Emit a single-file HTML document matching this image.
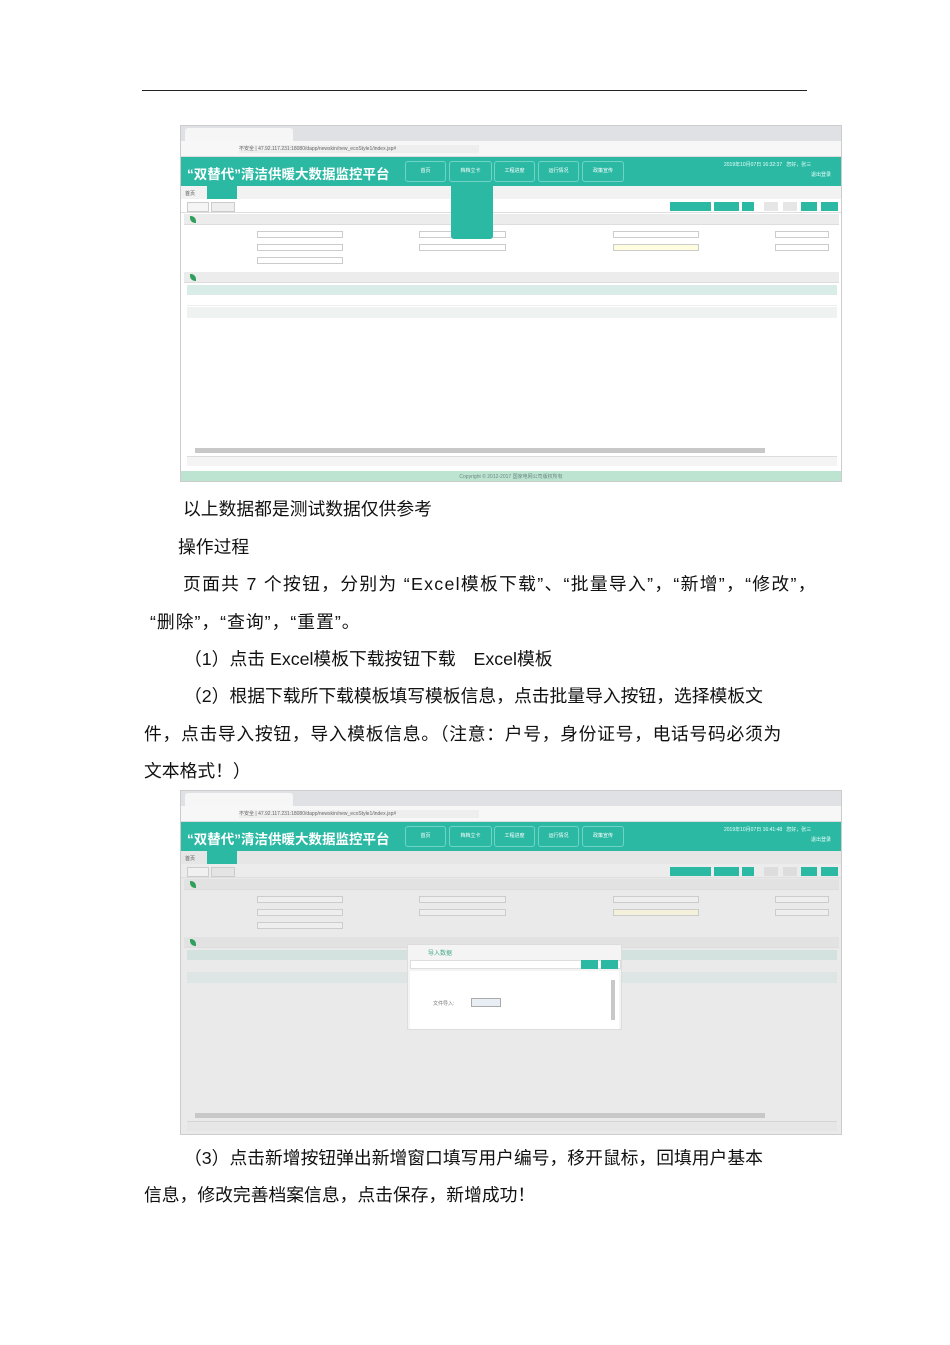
<!DOCTYPE html>
<html><head><meta charset="utf-8">
<style>
*{margin:0;padding:0;box-sizing:border-box}
body{width:950px;height:1345px;background:#fff;position:relative;overflow:hidden;font-family:"Liberation Sans","Noto Sans CJK SC",sans-serif;color:#111}
.hl{position:absolute;left:142px;top:90px;width:665px;height:1px;background:#222}
.t{position:absolute;font-size:17.8px;white-space:nowrap;line-height:20px;color:#111}
.ss{position:absolute;left:180px;width:662px;background:#fff;border:1px solid #ccc;overflow:hidden;font-size:5px;color:#555}
.ss div{position:absolute}
.tabbar{left:0;top:0;width:100%;height:15px;background:#dfe1e5}
.tab{left:4px;top:2px;width:108px;height:13px;background:#f6f6f6;border-radius:3px 3px 0 0}
.addr{left:0;top:15px;width:100%;height:16px;background:#f7f7f7;border-bottom:1px solid #ddd}
.head{left:0;top:31px;width:100%;height:29px;background:#2cb9a4}
.title{left:6px;top:6px;font-size:13.5px;font-weight:bold;color:#fff;white-space:nowrap}
.nb{top:4px;height:21px;border:1px solid #6fd4c4;border-radius:3px;color:#fff;font-size:5px;line-height:19px;text-align:center}
.nav{left:0;top:60px;width:100%;height:13px;background:#f2f2f2}
.navsel{left:26px;top:0;width:30px;height:13px;background:#2cb9a4}
.sub{left:0;top:73px;width:100%;height:14px;background:#fff;border-bottom:1px solid #ddd}
.btn{top:76px;height:9px;background:#2cb9a4}
.btng{top:76px;height:9px;background:#e6e6e6}
.sec{left:3px;width:655px;height:11px;background:#ececec;border-bottom:1px solid #ddd}
.leaf{left:6px;top:2px;width:6px;height:7px;background:#2e9f5c;border-radius:0 5px 0 5px}
.inp{height:7px;border:1px solid #ccc;background:#fff}
.th{left:6px;width:650px;height:10px;background:#d9ece8}
.row{left:6px;width:650px;height:11px}
.gray{background:#eef3f2}
.foot{left:0;width:100%;height:12px;background:#bde3d1}
.sb{left:14px;width:570px;height:5px;background:#c8c8c8}
</style></head><body>
<div class="hl"></div>

<!-- Screenshot 1 -->
<div class="ss" style="top:125px;height:357px">
 <div class="tabbar"><div class="tab"></div></div>
 <div class="addr"><div style="left:58px;top:4px;width:240px;height:8px;background:#eee;font-size:5px;color:#666;line-height:8px">不安全 | 47.92.117.231:18080/dapp/newskin/new_ecoStyle1/index.jsp#</div></div>
 <div class="head">
  <div class="title">“双替代”清洁供暖大数据监控平台</div>
  <div class="nb" style="left:224px;width:41px">首页</div>
  <div class="nb" style="left:268px;width:43px">档档立卡</div>
  <div class="nb" style="left:313px;width:41px">工程进度</div>
  <div class="nb" style="left:357px;width:41px">运行情况</div>
  <div class="nb" style="left:401px;width:42px">政策宣传</div>
  <div style="left:543px;top:4px;color:#e8fffa;white-space:nowrap">2019年10月07日 16:32:37 &nbsp; 您好，张三</div>
  <div style="left:630px;top:14px;color:#e8fffa">退出登录</div>
 </div>
 <div class="nav"><div style="left:4px;top:4px">首页</div><div class="navsel"></div></div>
 <div class="sub"><div style="left:6px;top:3px;width:22px;height:10px;border:1px solid #ccc;background:#f5f5f5"></div><div style="left:30px;top:3px;width:24px;height:10px;border:1px solid #ccc;background:#eee"></div></div>
 <div class="btn" style="left:489px;width:41px"></div><div class="btn" style="left:533px;width:25px"></div><div class="btn" style="left:561px;width:12px"></div>
 <div class="btng" style="left:583px;width:14px"></div><div class="btng" style="left:602px;width:14px"></div>
 <div class="btn" style="left:620px;width:16px"></div><div class="btn" style="left:640px;width:17px"></div>
 <div class="sec" style="top:88px"><div class="leaf"></div></div>
 <div class="inp" style="left:76px;top:105px;width:86px"></div><div class="inp" style="left:238px;top:105px;width:87px"></div><div class="inp" style="left:432px;top:105px;width:86px"></div><div class="inp" style="left:594px;top:105px;width:54px"></div>
 <div class="inp" style="left:76px;top:118px;width:86px"></div><div class="inp" style="left:238px;top:118px;width:87px"></div><div class="inp" style="left:432px;top:118px;width:86px;background:#fffde0"></div><div class="inp" style="left:594px;top:118px;width:54px"></div>
 <div class="inp" style="left:76px;top:131px;width:86px"></div>
 <div class="sec" style="top:146px"><div class="leaf"></div></div>
 <div class="th" style="top:159px"></div>
 <div class="row" style="top:169px;border-bottom:1px solid #eee"></div>
 <div class="row gray" style="top:181px"></div>
 <div style="left:270px;top:60px;width:42px;height:53px;background:#2cb9a4;border-radius:0 0 3px 3px"></div>
 <div class="sb" style="top:322px"></div>
 <div style="left:6px;top:330px;width:650px;height:10px;background:#f4f4f4;border-top:1px solid #ddd"></div>
 <div class="foot" style="top:345px;text-align:center;color:#6a8a80;line-height:12px"><span style="position:static">Copyright © 2012-2017 国家电网公司版权所有</span></div>
</div>

<!-- Screenshot 2 -->
<div class="ss" style="top:790px;height:345px;background:#eaeaea">
 <div class="tabbar"><div class="tab"></div></div>
 <div class="addr"><div style="left:58px;top:4px;width:240px;height:8px;background:#eee;font-size:5px;color:#666;line-height:8px">不安全 | 47.92.117.231:18080/dapp/newskin/new_ecoStyle1/index.jsp#</div></div>
 <div class="head">
  <div class="title">“双替代”清洁供暖大数据监控平台</div>
  <div class="nb" style="left:224px;width:41px">首页</div>
  <div class="nb" style="left:268px;width:43px">档档立卡</div>
  <div class="nb" style="left:313px;width:41px">工程进度</div>
  <div class="nb" style="left:357px;width:41px">运行情况</div>
  <div class="nb" style="left:401px;width:42px">政策宣传</div>
  <div style="left:543px;top:4px;color:#e8fffa;white-space:nowrap">2019年10月07日 16:41:48 &nbsp; 您好，张三</div>
  <div style="left:630px;top:14px;color:#e8fffa">退出登录</div>
 </div>
 <div class="nav" style="background:#e6e6e6"><div style="left:4px;top:4px">首页</div><div class="navsel"></div></div>
 <div class="sub" style="background:#ececec"><div style="left:6px;top:3px;width:22px;height:10px;border:1px solid #ccc;background:#f0f0f0"></div><div style="left:30px;top:3px;width:24px;height:10px;border:1px solid #ccc;background:#e4e4e4"></div></div>
 <div class="btn" style="left:489px;width:41px"></div><div class="btn" style="left:533px;width:25px"></div><div class="btn" style="left:561px;width:12px"></div>
 <div class="btng" style="left:583px;width:14px;background:#ddd"></div><div class="btng" style="left:602px;width:14px;background:#ddd"></div>
 <div class="btn" style="left:620px;width:16px"></div><div class="btn" style="left:640px;width:17px"></div>
 <div class="sec" style="top:88px;background:#e2e2e2"><div class="leaf"></div></div>
 <div class="inp" style="left:76px;top:105px;width:86px;background:#eee"></div><div class="inp" style="left:238px;top:105px;width:87px;background:#eee"></div><div class="inp" style="left:432px;top:105px;width:86px;background:#eee"></div><div class="inp" style="left:594px;top:105px;width:54px;background:#eee"></div>
 <div class="inp" style="left:76px;top:118px;width:86px;background:#eee"></div><div class="inp" style="left:238px;top:118px;width:87px;background:#eee"></div><div class="inp" style="left:432px;top:118px;width:86px;background:#f3f1dc"></div><div class="inp" style="left:594px;top:118px;width:54px;background:#eee"></div>
 <div class="inp" style="left:76px;top:131px;width:86px;background:#eee"></div>
 <div class="sec" style="top:146px;background:#e2e2e2"><div class="leaf"></div></div>
 <div class="th" style="top:159px;background:#d3e2df"></div>
 <div class="row" style="top:169px"></div>
 <div class="row" style="top:181px;background:#dde6e4"></div>
 <div style="left:226px;top:153px;width:215px;height:86px;background:#f4f4f4;border:1px solid #ddd">
  <div style="left:20px;top:3px;font-size:6px;color:#4a8">导入数据</div>
  <div style="left:2px;top:15px;width:211px;height:9px;background:#fff;border:1px solid #ddd"></div>
  <div style="left:173px;top:15px;width:17px;height:9px;background:#2cb9a4"></div>
  <div style="left:193px;top:15px;width:17px;height:9px;background:#2cb9a4"></div>
  <div style="left:2px;top:26px;width:209px;height:58px;background:#fff"></div>
  <div style="left:25px;top:55px;color:#777">文件导入:</div>
  <div style="left:63px;top:53px;width:30px;height:9px;border:1px solid #aaa;background:#e8eef3"></div>
  <div style="left:203px;top:35px;width:4px;height:40px;background:#c8c8c8"></div>
 </div>
 <div class="sb" style="top:322px"></div>
 <div style="left:6px;top:330px;width:650px;height:10px;background:#e6e6e6;border-top:1px solid #d5d5d5"></div>
</div>

<div class="t" style="left:183px;top:499px">以上数据都是测试数据仅供参考</div>
<div class="t" style="left:178px;top:537px">操作过程</div>
<div class="t" style="left:183px;top:574px;letter-spacing:1.3px">页面共 7 个按钮，分别为 “Excel模板下载”、“批量导入”，“新增”，“修改”，</div>
<div class="t" style="left:150px;top:612px;letter-spacing:1px">“删除”，“查询”，“重置”。</div>
<div class="t" style="left:184px;top:649px">（1）点击 Excel模板下载按钮下载　Excel模板</div>
<div class="t" style="left:184px;top:686px">（2）根据下载所下载模板填写模板信息，点击批量导入按钮，选择模板文</div>
<div class="t" style="left:144px;top:724px;letter-spacing:0.7px">件，点击导入按钮，导入模板信息。（注意：户号，身份证号，电话号码必须为</div>
<div class="t" style="left:144px;top:761px">文本格式！）</div>
<div class="t" style="left:184px;top:1148px">（3）点击新增按钮弹出新增窗口填写用户编号，移开鼠标，回填用户基本</div>
<div class="t" style="left:144px;top:1185px">信息，修改完善档案信息，点击保存，新增成功！</div>
</body></html>
